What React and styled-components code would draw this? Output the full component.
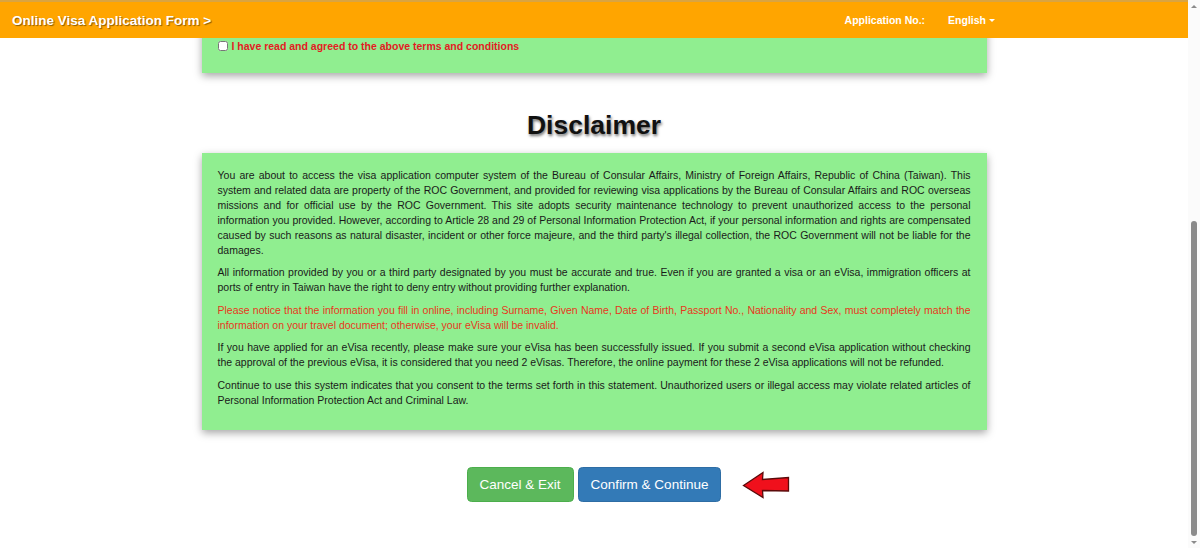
import React, { useLayoutEffect, useState } from 'react';
import styled, { createGlobalStyle } from 'styled-components';

const GlobalStyle = createGlobalStyle`
  body {
    margin: 0;
    padding-right: 12px;
    background: #fff;
    font-family: "Liberation Sans", Arial, sans-serif;
    color: #333;
  }
`;

const TRACK_GAP = 12;

export default function App() {
  const [thumb, setThumb] = useState({ top: 0, height: 0 });

  useLayoutEffect(() => {
    const doc = document.documentElement;
    window.scrollTo(0, doc.scrollHeight);
    const track = window.innerHeight - TRACK_GAP * 2;
    const ratio = track / doc.scrollHeight;
    setThumb({ top: window.scrollY * ratio, height: window.innerHeight * ratio });
  }, []);

  return (
    <>
      <GlobalStyle />
      <Header>
        <Title>Online Visa Application Form &gt;</Title>
        <Nav>
          <NavItem>Application No.:</NavItem>
          <NavItem>English <Caret /></NavItem>
        </Nav>
      </Header>

      <Main>
        <Heading>Terms and Conditions</Heading>
        <Panel>
          <p>Please read the following terms and conditions carefully before you start filling in the online visa application form.</p>
          <p>The applicant shall be responsible for the accuracy and completeness of the information provided in the application. Incomplete or false information may result in the rejection of the application.</p>
          <p>The fee paid for the eVisa application is non-refundable, regardless of whether the application is approved or denied.</p>
          <p>The eVisa holder must present the printed eVisa together with a valid passport upon arrival in Taiwan.</p>
          <p>The eVisa is valid for a single entry only, and the duration of stay is counted from the day following the date of arrival.</p>
          <p>Applicants who have been denied entry or deported from Taiwan before are not eligible to apply for an eVisa online.</p>
          <p>The passport of the applicant must be valid for at least six months from the date of arrival in Taiwan.</p>
          <p>The eVisa does not guarantee entry; the final decision rests with the immigration officers at the port of entry.</p>
          <p>Applicants are advised to apply at least one week before the intended date of travel.</p>
          <p>An eVisa that has been issued can not be amended, extended or transferred to another passport.</p>
          <p>Please keep your application number for checking the status of your application and printing your eVisa.</p>
          <Agree>
            <input type="checkbox" />
            <span>I have read and agreed to the above terms and conditions</span>
          </Agree>
        </Panel>

        <Heading>Disclaimer</Heading>
        <Panel>
          <p>You are about to access the visa application computer system of the Bureau of Consular Affairs, Ministry of Foreign Affairs, Republic of China (Taiwan). This system and related data are property of the ROC Government, and provided for reviewing visa applications by the Bureau of Consular Affairs and ROC overseas missions and for official use by the ROC Government. This site adopts security maintenance technology to prevent unauthorized access to the personal information you provided. However, according to Article 28 and 29 of Personal Information Protection Act, if your personal information and rights are compensated caused by such reasons as natural disaster, incident or other force majeure, and the third party's illegal collection, the ROC Government will not be liable for the damages.</p>
          <p>All information provided by you or a third party designated by you must be accurate and true. Even if you are granted a visa or an eVisa, immigration officers at ports of entry in Taiwan have the right to deny entry without providing further explanation.</p>
          <Warn>Please notice that the information you fill in online, including Surname, Given Name, Date of Birth, Passport No., Nationality and Sex, must completely match the information on your travel document; otherwise, your eVisa will be invalid.</Warn>
          <p>If you have applied for an eVisa recently, please make sure your eVisa has been successfully issued. If you submit a second eVisa application without checking the approval of the previous eVisa, it is considered that you need 2 eVisas. Therefore, the online payment for these 2 eVisa applications will not be refunded.</p>
          <p>Continue to use this system indicates that you consent to the terms set forth in this statement. Unauthorized users or illegal access may violate related articles of Personal Information Protection Act and Criminal Law.</p>
        </Panel>

        <Actions>
          <Buttons>
            <Button $variant="success">Cancel &amp; Exit</Button>
            <Button $variant="primary">Confirm &amp; Continue</Button>
            <Pointer viewBox="0 0 48 28" aria-hidden="true">
              <polygon
                points="1.5,14.5 21,1.5 20.5,8.5 46.5,6.5 46.5,20 20.5,19.5 21,26.5"
                fill="#f0101c"
                stroke="#5a0a0a"
                strokeWidth="1.3"
                strokeLinejoin="miter"
              />
            </Pointer>
          </Buttons>
        </Actions>
      </Main>

      <Scrollbar aria-hidden="true">
        <ScrollArrow $dir="up" />
        <Track>
          <Thumb style={{ top: thumb.top, height: thumb.height }} />
        </Track>
        <ScrollArrow $dir="down" />
      </Scrollbar>
    </>
  );
}

const Header = styled.header`
  position: fixed;
  top: 0;
  left: 0;
  right: 12px;
  z-index: 10;
  height: 36px;
  display: flex;
  align-items: center;
  justify-content: space-between;
  background: #ffa500;
  border-top: 2px solid #d9a441;
  padding: 0 193px 0 12px;
`;

const Title = styled.div`
  color: #fff;
  font-size: 13.5px;
  font-weight: bold;
  text-shadow: 1px 1px 1px rgba(0, 0, 0, 0.45);
`;

const Nav = styled.nav`
  display: flex;
  align-items: center;
  gap: 23px;
`;

const NavItem = styled.span`
  display: flex;
  align-items: center;
  gap: 3px;
  color: #fff;
  font-size: 10.5px;
  font-weight: bold;
`;

const Caret = styled.i`
  display: inline-block;
  width: 0;
  height: 0;
  border-top: 3px solid #fff;
  border-left: 3px solid transparent;
  border-right: 3px solid transparent;
`;

const Main = styled.main`
  display: flex;
  flex-direction: column;
  align-items: center;
  padding: 38px 0 46px;
`;

const Heading = styled.h2`
  margin: 38px 0 13px;
  font-size: 26.5px;
  line-height: 1.1;
  font-weight: bold;
  color: #111;
  text-shadow: 1px 2px 3px rgba(0, 0, 0, 0.55);
`;

const Panel = styled.section`
  box-sizing: border-box;
  width: 785px;
  padding: 15px 16px 15px;
  background: #90ee90;
  box-shadow: 0 3px 8px rgba(0, 0, 0, 0.35);
  font-size: 10.5px;
  line-height: 15px;
  color: #1a1a1a;
  text-align: justify;

  p {
    margin: 0 0 7.5px;
  }
`;

const Warn = styled.p`
  color: #e8361c;
`;

const Agree = styled.label`
  display: flex;
  align-items: center;
  gap: 2px;
  padding: 8px 0 4px;
  color: #e31b23;
  font-weight: bold;
  font-size: 10.5px;

  input {
    width: 10px;
    height: 10px;
    margin: 0 2px 0 0;
  }
`;

const Actions = styled.div`
  display: flex;
  justify-content: center;
  margin-top: 37px;
`;

const Buttons = styled.div`
  position: relative;
  display: flex;
  gap: 4px;
`;

const Button = styled.button`
  height: 35px;
  padding: 0 12px;
  border: 1px solid ${p => (p.$variant === 'primary' ? '#2e6da4' : '#4cae4c')};
  border-radius: 4.5px;
  background: ${p => (p.$variant === 'primary' ? '#337ab7' : '#5cb85c')};
  color: #fff;
  font-family: "Liberation Sans", Arial, sans-serif;
  font-size: 13.5px;
  cursor: pointer;
`;

const Pointer = styled.svg`
  position: absolute;
  left: calc(100% + 21px);
  top: 4px;
  width: 48px;
  height: 28px;
`;

const Scrollbar = styled.div`
  position: fixed;
  top: 0;
  right: 0;
  bottom: 0;
  width: 12px;
  display: flex;
  flex-direction: column;
  background: #fbfbfb;
`;

const ScrollArrow = styled.div`
  height: ${TRACK_GAP}px;
  display: flex;
  align-items: center;
  justify-content: center;

  &::before {
    content: '';
    border-left: 3px solid transparent;
    border-right: 3px solid transparent;
    ${p => (p.$dir === 'up' ? 'border-bottom: 3px solid #8b8b8b;' : 'border-top: 3px solid #8b8b8b;')}
  }
`;

const Track = styled.div`
  position: relative;
  flex: 1;
`;

const Thumb = styled.div`
  position: absolute;
  left: 3px;
  right: 3px;
  border-radius: 3px;
  background: #8b8b8b;
`;
